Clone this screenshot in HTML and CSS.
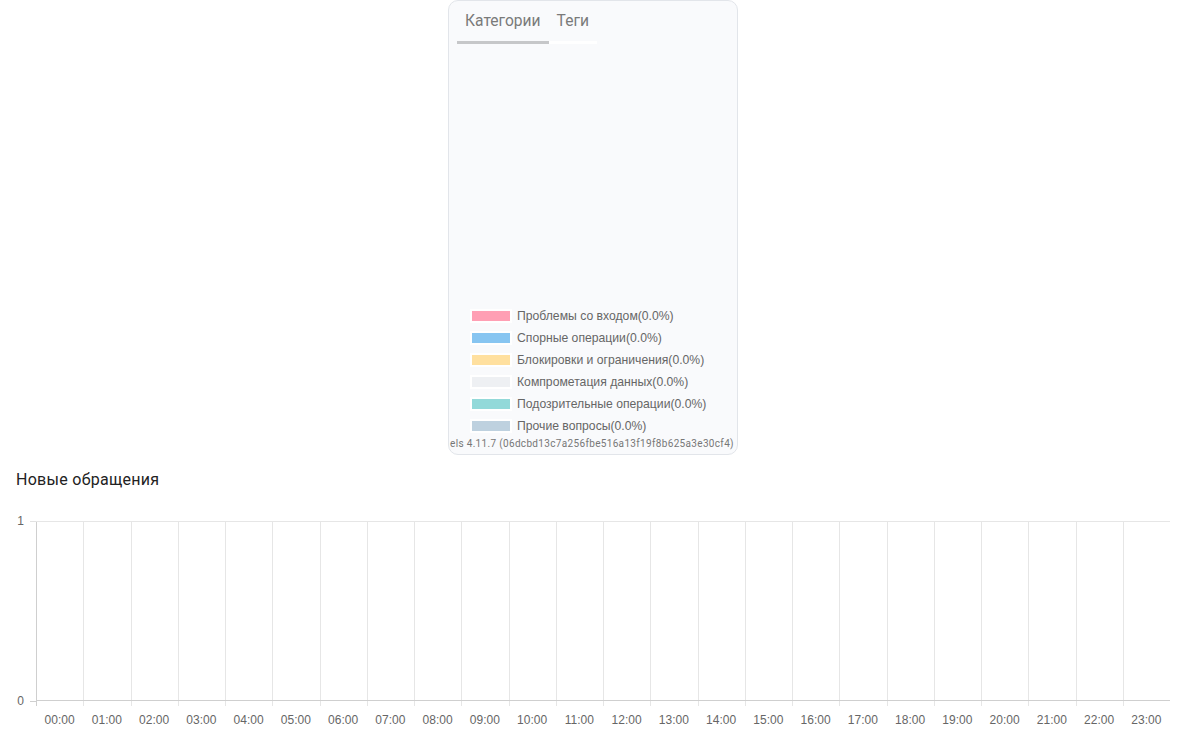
FILE: index.html
```html
<!DOCTYPE html>
<html lang="ru">
<head>
<meta charset="utf-8">
<title>Обращения</title>
<link rel="stylesheet" href="styles.css">
</head>
<body>
<div class="card">
  <div class="tabs">
    <div class="tab active">Категории</div>
    <div class="tab">Теги</div>
  </div>
  <div class="pie-area"></div>
  <ul class="legend">
    <li class="legend-item"><span class="swatch sw-pink"></span>Проблемы со входом(0.0%)</li>
    <li class="legend-item"><span class="swatch sw-blue"></span>Спорные операции(0.0%)</li>
    <li class="legend-item"><span class="swatch sw-yellow"></span>Блокировки и ограничения(0.0%)</li>
    <li class="legend-item"><span class="swatch sw-gray"></span>Компрометация данных(0.0%)</li>
    <li class="legend-item"><span class="swatch sw-teal"></span>Подозрительные операции(0.0%)</li>
    <li class="legend-item"><span class="swatch sw-steel"></span>Прочие вопросы(0.0%)</li>
  </ul>
  <div class="version">els 4.11.7 (06dcbd13c7a256fbe516a13f19f8b625a3e30cf4)</div>
</div>

<section class="chart">
  <h2 class="chart-title">Новые обращения</h2>
  <div class="chart-body">
    <div class="yaxis">
      <div class="ytick"><span class="ylabel">1</span><span class="ytick-line"></span></div>
      <div class="ytick"><span class="ylabel">0</span><span class="ytick-line"></span></div>
    </div>
    <div class="plot">
      <div class="cell first"></div><div class="cell"></div><div class="cell"></div><div class="cell"></div>
      <div class="cell"></div><div class="cell"></div><div class="cell"></div><div class="cell"></div>
      <div class="cell"></div><div class="cell"></div><div class="cell"></div><div class="cell"></div>
      <div class="cell"></div><div class="cell"></div><div class="cell"></div><div class="cell"></div>
      <div class="cell"></div><div class="cell"></div><div class="cell"></div><div class="cell"></div>
      <div class="cell"></div><div class="cell"></div><div class="cell"></div><div class="cell"></div>
    </div>
    <div class="xaxis">
      <div class="xcell first"><span>00:00</span></div>
      <div class="xcell"><span>01:00</span></div>
      <div class="xcell"><span>02:00</span></div>
      <div class="xcell"><span>03:00</span></div>
      <div class="xcell"><span>04:00</span></div>
      <div class="xcell"><span>05:00</span></div>
      <div class="xcell"><span>06:00</span></div>
      <div class="xcell"><span>07:00</span></div>
      <div class="xcell"><span>08:00</span></div>
      <div class="xcell"><span>09:00</span></div>
      <div class="xcell"><span>10:00</span></div>
      <div class="xcell"><span>11:00</span></div>
      <div class="xcell"><span>12:00</span></div>
      <div class="xcell"><span>13:00</span></div>
      <div class="xcell"><span>14:00</span></div>
      <div class="xcell"><span>15:00</span></div>
      <div class="xcell"><span>16:00</span></div>
      <div class="xcell"><span>17:00</span></div>
      <div class="xcell"><span>18:00</span></div>
      <div class="xcell"><span>19:00</span></div>
      <div class="xcell"><span>20:00</span></div>
      <div class="xcell"><span>21:00</span></div>
      <div class="xcell"><span>22:00</span></div>
      <div class="xcell"><span>23:00</span></div>
    </div>
  </div>
</section>
</body>
</html>
```

FILE: styles.css
```css
* { box-sizing: border-box; }

html, body {
  margin: 0;
  padding: 0;
  background: #ffffff;
  font-family: Roboto, "Liberation Sans", Arial, sans-serif;
}

.card {
  width: 290px;
  height: 455px;
  margin: 0 auto;
  background: #f9fafc;
  border: 1px solid #e2e5ea;
  border-radius: 10px;
  display: flex;
  flex-direction: column;
  overflow: hidden;
}

.tabs {
  display: flex;
  padding: 0 8px;
}

.tab {
  padding: 10px 8px 10px;
  font-size: 15.6px;
  line-height: 20px;
  font-weight: 400;
  color: #7a7a7a;
  border-bottom: 3px solid #ffffff;
}

.tab.active {
  border-bottom-color: #c6c7c9;
}

.pie-area {
  flex: 1;
}

.legend {
  list-style: none;
  margin: 0;
  padding: 0 0 0 21px;
}

.legend-item {
  display: flex;
  align-items: center;
  height: 22px;
  font-family: "Liberation Sans", Arial, sans-serif;
  font-size: 12.2px;
  color: #666666;
}

.swatch {
  width: 42px;
  height: 14px;
  border: 2px solid #ffffff;
  margin-right: 5px;
  flex: none;
}

.sw-pink { background: #ff9fb4; }
.sw-blue { background: #87c5f1; }
.sw-yellow { background: #ffe09f; }
.sw-gray { background: #eef0f3; }
.sw-teal { background: #92d9d9; }
.sw-steel { background: #bed1df; }

.version {
  padding: 0 0 3px 1px;
  height: 17px;
  font-size: 10px;
  line-height: 14px;
  color: #777777;
  white-space: nowrap;
  letter-spacing: 0.33px;
}

.chart {
  padding: 0 16px;
}

.chart-title {
  margin: 14px 0 0;
  font-size: 16px;
  line-height: 22px;
  font-weight: 400;
  color: #222222;
  letter-spacing: 0.28px;
}

.chart-body {
  display: grid;
  grid-template-columns: 20px 1fr;
  grid-template-rows: 180px auto;
  margin-top: 30px;
}

.yaxis {
  grid-column: 1;
  grid-row: 1;
  margin: -7px 0;
  display: flex;
  flex-direction: column;
  justify-content: space-between;
}

.ytick {
  height: 14px;
  display: flex;
  align-items: center;
  justify-content: flex-end;
}

.ylabel {
  font-family: "Liberation Sans", Arial, sans-serif;
  font-size: 12px;
  color: #666666;
  margin-right: 6px;
}

.ytick-line {
  width: 6px;
  height: 1px;
  background: #e2e2e2;
}

.ytick:last-child .ytick-line {
  background: #cfcfcf;
}

.plot {
  grid-column: 2;
  grid-row: 1;
  display: grid;
  grid-template-columns: repeat(24, 1fr);
  border-top: 1px solid #e6e6e6;
  border-bottom: 1px solid #cfcfcf;
}

.cell {
  border-left: 1px solid #e6e6e6;
}

.cell.first {
  border-left-color: #cfcfcf;
}

.xaxis {
  grid-column: 2;
  grid-row: 2;
  display: grid;
  grid-template-columns: repeat(24, 1fr);
}

.xcell {
  position: relative;
  padding-top: 12px;
  text-align: center;
  font-family: "Liberation Sans", Arial, sans-serif;
  font-size: 12px;
  line-height: 14px;
  color: #666666;
}

.xcell::before {
  content: "";
  position: absolute;
  left: 0;
  top: 0;
  width: 1px;
  height: 5px;
  background: #e6e6e6;
}

.xcell.first::before {
  background: #cfcfcf;
}
```
